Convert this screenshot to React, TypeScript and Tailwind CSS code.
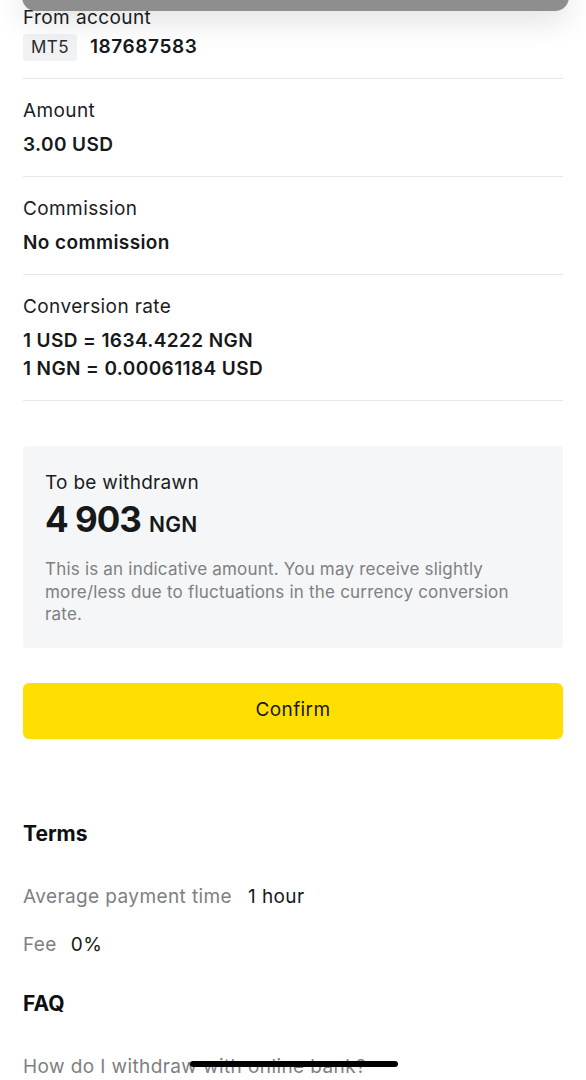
import React from "react";

/**
 * Withdrawal confirmation screen
 */

const font = { fontFamily: "Inter, 'Noto Sans', sans-serif" };

function Row({ label, children }: { label: string; children: React.ReactNode }) {
  return (
    <div className="border-b border-[#e6e7e8] pt-[20px] pb-[19px]">
      <div className="text-[19px] leading-[24px] tracking-[0.4px] text-[#1b1d1f]">{label}</div>
      <div className="mt-[10px] text-[19px] leading-[24px] font-semibold tracking-[0.4px] text-[#16181a]">
        {children}
      </div>
    </div>
  );
}

export default function App() {
  return (
    <div className="relative h-[1080px] w-[586px] overflow-hidden bg-white" style={font}>
      {/* top sheet edge */}
      <div className="absolute left-[22px] right-[17px] top-[-20px] h-[31px] rounded-b-[14px] bg-[#8e8e8e] shadow-[0_10px_30px_rgba(0,0,0,0.12)]" />

      <div className="px-[23px]">
        <div className="border-b border-[#e6e7e8] pt-[6px] pb-[16px]">
          <div className="text-[19px] leading-[24px] tracking-[0.4px] text-[#1b1d1f]">From account</div>
          <div className="mt-[3px] flex items-center gap-[13px]">
            <span className="flex h-[27px] items-center rounded-[3px] bg-[#f1f2f3] px-[8px] text-[17px] tracking-[0.4px] text-[#2a2c2e]">
              MT5
            </span>
            <span className="text-[19px] font-semibold tracking-[0.6px] text-[#16181a]">187687583</span>
          </div>
        </div>

        <Row label="Amount">3.00 USD</Row>
        <Row label="Commission">No commission</Row>
        <div className="border-b border-[#e6e7e8] pt-[20px] pb-[17px]">
          <div className="text-[19px] leading-[24px] tracking-[0.4px] text-[#1b1d1f]">Conversion rate</div>
          <div className="mt-[8px] text-[19px] leading-[28px] font-semibold tracking-[0.4px] text-[#16181a]">
            <div>1 USD = 1634.4222 NGN</div>
            <div>1 NGN = 0.00061184 USD</div>
          </div>
        </div>

        <div className="mt-[45px] rounded-[4px] bg-[#f5f6f7] px-[22px] pt-[25px] pb-[22px]">
          <div className="text-[19px] leading-[24px] tracking-[0.3px] text-[#1b1d1f]">To be withdrawn</div>
          <div className="mt-[4px] flex items-baseline gap-[8px] text-[#16181a]">
            <span className="text-[35px] leading-[40px] font-bold tracking-[-1px]">4 903</span>
            <span className="text-[21px] font-semibold tracking-[0.4px]">NGN</span>
          </div>
          <p className="mt-[18px] text-[17px] leading-[22.5px] tracking-[0.2px] text-[#7d8083]">
            This is an indicative amount. You may receive slightly more/less due to fluctuations in
            the currency conversion rate.
          </p>
        </div>

        <button className="mt-[35px] flex h-[56px] w-full items-center justify-center rounded-[6px] bg-[#ffde02] text-[19px] tracking-[0.4px] text-[#16181a]">
          Confirm
        </button>

        <h2 className="mt-[81px] text-[21px] leading-[28px] font-bold text-[#0d0f11]">Terms</h2>
        <div className="mt-[37px] flex gap-[16px] text-[19px] leading-[24px] tracking-[0.4px]">
          <span className="text-[#7d8083]">Average payment time</span>
          <span className="text-[#16181a]">1 hour</span>
        </div>
        <div className="mt-[24px] flex gap-[14px] text-[19px] leading-[24px] tracking-[0.4px]">
          <span className="text-[#7d8083]">Fee</span>
          <span className="text-[#16181a]">0%</span>
        </div>
        <h2 className="mt-[33px] text-[21px] leading-[28px] font-bold text-[#0d0f11]">FAQ</h2>
        <div className="mt-[37px] text-[19px] leading-[24px] tracking-[0.4px] text-[#7d8083]">
          How do I withdraw with online bank?
        </div>
      </div>

      {/* home indicator */}
      <div className="absolute left-[190px] top-[1061px] h-[6px] w-[208px] rounded-full bg-black" />
    </div>
  );
}
